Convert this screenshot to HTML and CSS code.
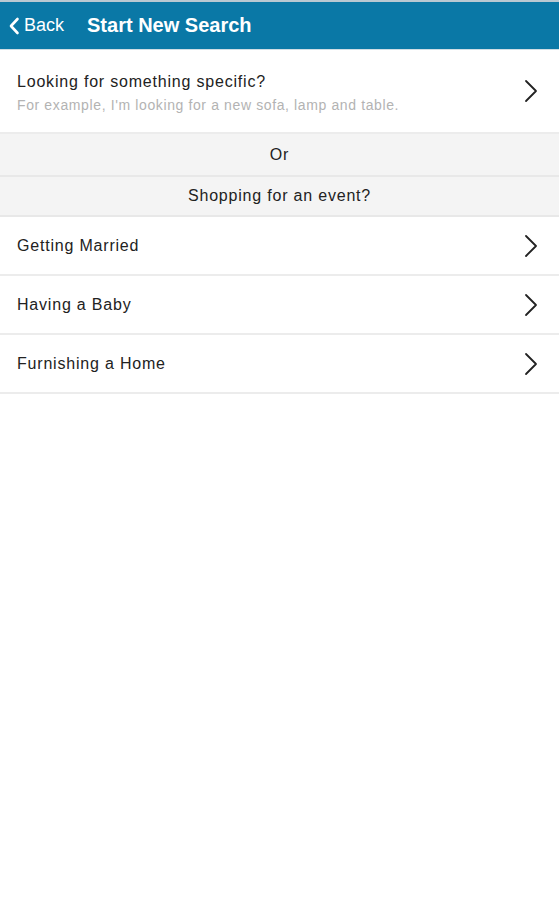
FILE: index.html
```html
<!DOCTYPE html>
<html lang="en">
  <head>
    <meta charset="UTF-8" />
    <meta name="viewport" content="width=device-width, initial-scale=1.0" />
    <title>Start New Search</title>
    <link rel="stylesheet" href="styles.css">
  </head>
  <body>
    <header class="top-bar">
      <a class="back-link" href="#">
        <svg class="back-icon" width="12" height="18" viewBox="0 0 12 18">
          <path d="M9.5 2 L3 9 L9.5 16" fill="none" stroke="#fff" stroke-width="2.6" stroke-linecap="round" stroke-linejoin="round" />
        </svg>
        Back
      </a>
      <h1 class="page-title">Start New Search</h1>
    </header>

    <a class="list-row list-row-tall" href="#">
      <div class="row-text">
        <div class="row-title">Looking for something specific?</div>
        <div class="row-hint">For example, I'm looking for a new sofa, lamp and table.</div>
      </div>
      <svg class="chevron" width="14" height="24" viewBox="0 0 14 24">
        <path d="M2 2 L12 12 L2 22" fill="none" stroke="#222" stroke-width="1.8" stroke-linecap="round" stroke-linejoin="round" />
      </svg>
    </a>

    <div class="section-label section-or">Or</div>
    <div class="section-label section-event">Shopping for an event?</div>

    <a class="list-row" href="#">
      <div class="row-title">Getting Married</div>
      <svg class="chevron" width="14" height="24" viewBox="0 0 14 24">
        <path d="M2 2 L12 12 L2 22" fill="none" stroke="#222" stroke-width="1.8" stroke-linecap="round" stroke-linejoin="round" />
      </svg>
    </a>
    <a class="list-row" href="#">
      <div class="row-title">Having a Baby</div>
      <svg class="chevron" width="14" height="24" viewBox="0 0 14 24">
        <path d="M2 2 L12 12 L2 22" fill="none" stroke="#222" stroke-width="1.8" stroke-linecap="round" stroke-linejoin="round" />
      </svg>
    </a>
    <a class="list-row" href="#">
      <div class="row-title">Furnishing a Home</div>
      <svg class="chevron" width="14" height="24" viewBox="0 0 14 24">
        <path d="M2 2 L12 12 L2 22" fill="none" stroke="#222" stroke-width="1.8" stroke-linecap="round" stroke-linejoin="round" />
      </svg>
    </a>
  </body>
</html>
```

FILE: styles.css
```css
body {
  margin: 0;
  font-family: "Liberation Sans", Arial, sans-serif;
  background-color: #fff;
  color: #222;
}

.top-bar {
  display: flex;
  align-items: center;
  height: 47px;
  background-color: #0a78a6;
  border-top: 2px solid #b9c9d2;
  border-bottom: 1px solid #cfdde4;
  padding-left: 8px;
}

.back-link {
  display: flex;
  align-items: center;
  gap: 4px;
  color: #fff;
  text-decoration: none;
  font-size: 18px;
  margin-right: 23px;
}

.back-icon {
  display: block;
}

.page-title {
  margin: 0;
  color: #fff;
  font-size: 20px;
  font-weight: 700;
}

.list-row {
  display: flex;
  align-items: center;
  justify-content: space-between;
  height: 57px;
  padding: 0 21px 0 17px;
  border-bottom: 2px solid #ececec;
  color: #222;
  text-decoration: none;
}

.list-row-tall {
  height: 82px;
}

.row-text {
  padding-top: 3px;
}

.row-title {
  font-size: 16px;
  letter-spacing: 0.8px;
}

.row-hint {
  margin-top: 6px;
  font-size: 14px;
  color: #b3b3b3;
  letter-spacing: 0.62px;
}

.chevron {
  display: block;
  flex-shrink: 0;
}

.section-label {
  display: flex;
  align-items: center;
  justify-content: center;
  background-color: #f4f4f4;
  border-bottom: 2px solid #e8e8e8;
  font-size: 16px;
  letter-spacing: 0.8px;
  color: #222;
}

.section-or {
  height: 41px;
}

.section-event {
  height: 38px;
}
```
